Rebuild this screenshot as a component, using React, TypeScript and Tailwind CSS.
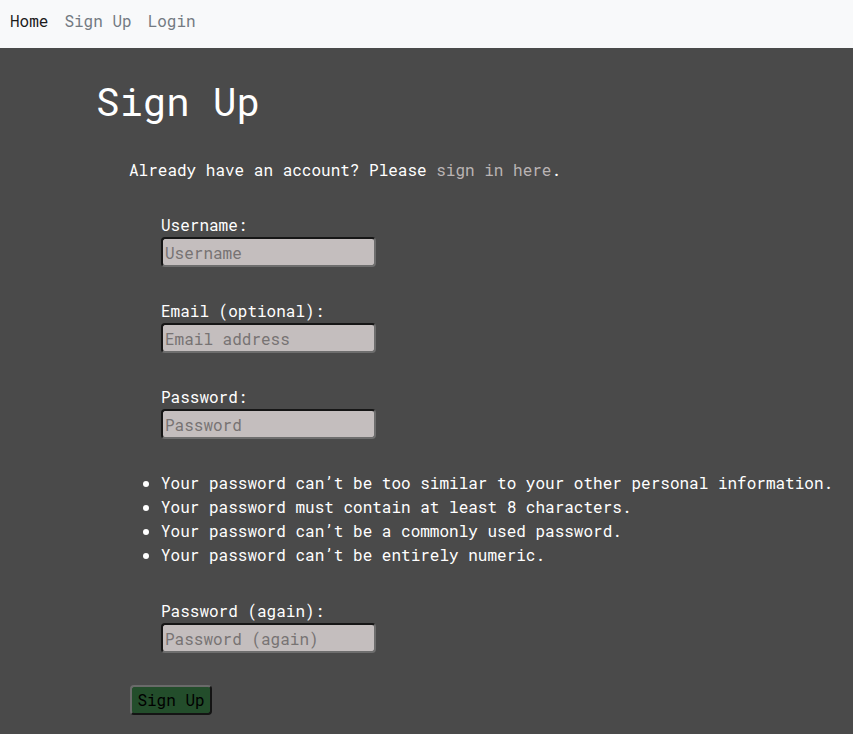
import React from "react";

const mono = { fontFamily: '"Roboto Mono", "DejaVu Sans Mono", "Liberation Mono", monospace' };

function Field({ label, placeholder, type = "text" }: { label: string; placeholder: string; type?: string }) {
  return (
    <div className="flex flex-col items-start">
      <label className="text-white text-[16px] leading-[24px]">{label}</label>
      <input
        type={type}
        placeholder={placeholder}
        className="w-[215px] h-[30px] px-[2px] text-[16px] leading-[24px] bg-[#c4bebe] text-black placeholder:text-[#777373] rounded-[4px] border-2 border-t-[#161616] border-l-[#161616] border-b-[#6e6e6e] border-r-[#6e6e6e] outline-none"
        style={mono}
      />
    </div>
  );
}

export default function App() {
  return (
    <div className="min-h-[734px] bg-[#4a4a4a]" style={mono}>
      <nav className="h-[48px] bg-[#f8f9fa] flex items-start pt-[9px] pl-[2px]">
        <a className="px-[8px] text-[16px] leading-[24px] text-[#1b1b1b]">Home</a>
        <a className="px-[8px] text-[16px] leading-[24px] text-[#737a82]">Sign Up</a>
        <a className="px-[8px] text-[16px] leading-[24px] text-[#737a82]">Login</a>
      </nav>
      <main className="pl-[97px] pt-[29px] pb-[19px]">
        <h1 className="text-white text-[39px] leading-[48px] font-normal -ml-[1px]">Sign Up</h1>
        <p className="mt-[33px] ml-[32px] text-white text-[16px] leading-[24px]">
          Already have an account? Please <a className="text-[#bab4b4]">sign in here</a>.
        </p>
        <form className="mt-[31px] ml-[32px] flex flex-col">
          <div className="ml-[32px] flex flex-col gap-[32px]">
            <Field label="Username:" placeholder="Username" />
            <Field label="Email (optional):" placeholder="Email address" type="email" />
            <Field label="Password:" placeholder="Password" type="password" />
          </div>
          <ul className="mt-[32px] ml-[32px] list-disc pl-0 text-white text-[16px] leading-[24px]" style={{ listStylePosition: "outside" }}>
            <li>Your password can’t be too similar to your other personal information.</li>
            <li>Your password must contain at least 8 characters.</li>
            <li>Your password can’t be a commonly used password.</li>
            <li>Your password can’t be entirely numeric.</li>
          </ul>
          <div className="mt-[32px] ml-[32px]">
            <Field label="Password (again):" placeholder="Password (again)" type="password" />
          </div>
          <div className="mt-[32px] ml-[1px]">
            <button
              type="button"
              className="h-[30px] w-[82px] text-[16px] leading-[24px] text-black bg-[#234d2b] rounded-[4px] border-2 border-t-[#6a6a6a] border-l-[#6a6a6a] border-b-[#141414] border-r-[#141414]"
              style={mono}
            >
              Sign Up
            </button>
          </div>
        </form>
      </main>
    </div>
  );
}
